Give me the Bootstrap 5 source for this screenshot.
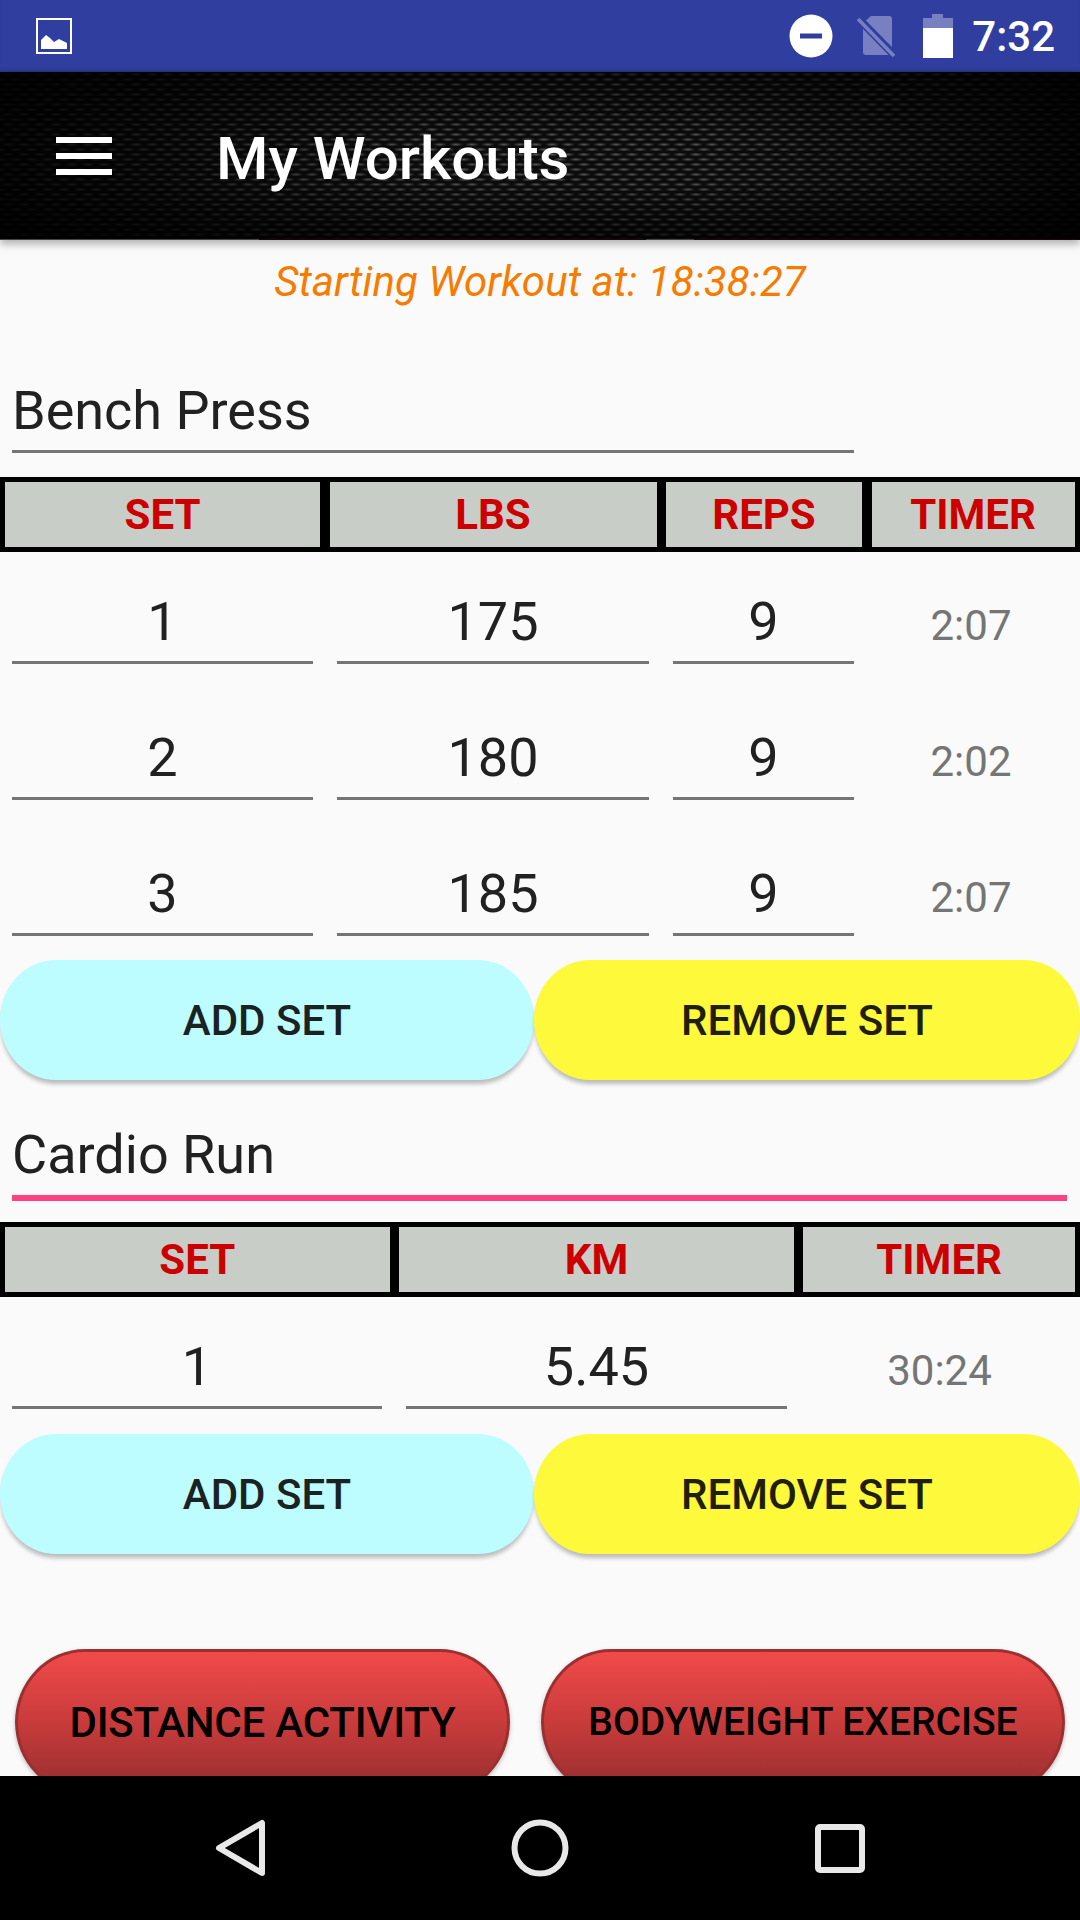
<!DOCTYPE html>
<html lang="en">
<head>
  <meta charset="UTF-8">
  <title>My Workouts</title>
  <link href="https://cdn.jsdelivr.net/npm/bootstrap@5.3.0/dist/css/bootstrap.min.css" rel="stylesheet">
  <style>
    body { background: #fafafa; font-family: Roboto, sans-serif; color: #212121; }
    .phone { width: 1080px; height: 1920px; overflow: hidden; }

    .status-bar { height: 72px; background: #303f9f; padding: 0 25px 0 36px; color: #fff; font-size: 42px; font-weight: 500; box-shadow: inset 0 -4px 4px -3px rgba(0,0,0,.2); }
    .ic-dnd { margin-right: 24px; }
    .ic-sim { margin-right: 26px; }
    .ic-batt { margin-right: 19px; }
    .tool-bar {
      height: 168px; padding: 0 0 0 56px; color: #fff; position: relative; z-index: 2;
      box-shadow: 0 4px 8px rgba(0,0,0,.3);
      background-color: #0c0c0c;
      background-image:
        linear-gradient(90deg, #444 0 259px, #16080f 259px 646px, #444 646px 694px, #16080f 694px),
        linear-gradient(90deg, rgba(0,0,0,.85) 0, rgba(0,0,0,.6) 14%, rgba(0,0,0,0) 40%, rgba(0,0,0,0) 66%, rgba(0,0,0,.55) 88%, rgba(0,0,0,.85) 100%),
        linear-gradient(180deg, rgba(0,0,0,.6) 0, rgba(0,0,0,0) 40%, rgba(0,0,0,0) 65%, rgba(0,0,0,.7) 100%),
        radial-gradient(ellipse 7px 2px at 8px 2.5px, #565656, rgba(80,80,80,0)),
        radial-gradient(ellipse 7px 2px at 0 7.5px, #565656, rgba(80,80,80,0)),
        radial-gradient(ellipse 7px 2px at 16px 7.5px, #565656, rgba(80,80,80,0));
      background-size: 100% 1px, auto, auto, 16px 10px, 16px 10px, 16px 10px;
      background-repeat: no-repeat, no-repeat, no-repeat, repeat, repeat, repeat;
      background-position: bottom, 0 0, 0 0, 0 0, 0 0, 0 0;
    }
    .burger { width: 56px; height: 38px; margin-right: 104px; display: flex; flex-direction: column; justify-content: space-between; }
    .burger span { height: 6px; background: #fff; }
    .tool-title { font-size: 60px; font-weight: 500; line-height: 1; padding-top: 5px; }

    .content { flex: 1 1 auto; min-height: 0; overflow: hidden; }
    .start-line { height: 84px; padding-top: 12px; font-size: 42px; line-height: 60px; font-style: italic; color: #f57c00; text-align: center; letter-spacing: .08px; }

    .name-field { width: 842px; margin: 35px 0 24px 12px; height: 94px; border-bottom: 3px solid #757575; font-size: 54px; line-height: 64px; padding-top: 20px; }
    .name-field.active { width: 1055px; height: 99px; margin-top: 22px; margin-bottom: 21px; padding-top: 21px; border-bottom: 6px solid #ff4081; }

    .head-row { height: 75px; background: #000; padding: 5px; gap: 9.5px; }
    .head-cell { background: #c9cdc7; color: #cc0000; font-size: 42px; font-weight: 700; }
    .val-row { height: 136px; }
    .val-row.one { height: 112px; }
    .val-box { text-align: center; font-size: 54px; line-height: 64px; }
    .val-line { border-bottom: 3px solid #757575; height: 112px; padding-top: 38px; margin-left: 24px; }
    .val-line:first-child { margin-left: 12px; }
    .val-timer { text-align: center; font-size: 42px; color: #757575; padding: 49px 0 0 8px; line-height: 50px; }
    .val-timer.wide { padding-left: 12px; }

    .set-row { margin-top: 24px; }
    .set-row.low { margin-top: 25px; }
    .set-btn { height: 120px; border: 0; border-radius: 56px / 60px; font-size: 42px; font-weight: 500; color: #1b2222; box-shadow: 0 5px 4px -1px rgba(0,0,0,.25); }
    .set-btn.add { width: 534px; background: #bdfcff; }
    .set-btn.remove { width: 546px; background: #fff93b; color: #201f0c; }

    .act-row { margin-top: 95px; padding: 0 15px; gap: 31px; }
    .act-btn { height: 146px; flex: 0 0 auto; border: 3px solid #9a3030; border-radius: 70px / 73px; color: #000; font-weight: 500; background: linear-gradient(180deg, #f24a4a 0, #c93b3b 50%, #962e2e 100%); box-shadow: 0 2px 4px rgba(0,0,0,.25); white-space: nowrap; padding: 0; }
    .act-btn.dist { width: 495px; font-size: 42px; letter-spacing: -.2px; }
    .act-btn.body { width: 524px; font-size: 39px; }

    .nav-bar { height: 144px; background: #000; position: relative; z-index: 2; }
    .nav-bar svg { display: block; }
  </style>
</head>
<body>
<div class="phone d-flex flex-column">

  <div class="status-bar d-flex align-items-center flex-shrink-0">
    <svg width="36" height="36" viewBox="0 0 36 36">
      <rect x="1" y="1" width="34" height="34" fill="none" stroke="#fff" stroke-width="2"/>
      <path d="M5 31V22L10 17L14 20L18 24L23 21L31 25V31Z" fill="#fff"/>
    </svg>
    <div class="ms-auto d-flex align-items-center">
      <svg class="ic-dnd" width="44" height="44" viewBox="0 0 44 44"><circle cx="22" cy="22" r="21.5" fill="#fff"/><rect x="11" y="19.5" width="22" height="5" fill="#303f9f"/></svg>
      <svg class="ic-sim" width="40" height="44" viewBox="0 0 40 44">
        <path d="M6 9V38a3 3 0 0 0 3 3H32a3 3 0 0 0 3-3V5a3 3 0 0 0-3-3H14Z" fill="#7880c2"/>
        <path d="M1 4L39 43" stroke="#303f9f" stroke-width="8"/>
        <path d="M1 5L37 42" stroke="#7880c2" stroke-width="3.5"/>
      </svg>
      <svg class="ic-batt" width="30" height="44" viewBox="0 0 30 44"><path d="M9 0H20V4H30V14H0V4H9Z" fill="#7880c2"/><rect y="14" width="30" height="30" fill="#fff"/></svg>
      <span>7:32</span>
    </div>
  </div>

  <div class="tool-bar d-flex align-items-center flex-shrink-0">
    <div class="burger"><span></span><span></span><span></span></div>
    <div class="tool-title">My Workouts</div>
  </div>

  <div class="content">
    <div class="start-line">Starting Workout at: 18:38:27</div>

    <div class="name-field">Bench Press</div>
    <div class="head-row d-flex">
      <div class="head-cell d-flex align-items-center justify-content-center" style="width:315px">SET</div>
      <div class="head-cell d-flex align-items-center justify-content-center" style="width:327px">LBS</div>
      <div class="head-cell d-flex align-items-center justify-content-center" style="width:196px">REPS</div>
      <div class="head-cell d-flex align-items-center justify-content-center" style="width:203px">TIMER</div>
    </div>
    <div class="val-row d-flex">
      <div class="val-box val-line" style="width:301px">1</div>
      <div class="val-box val-line" style="width:312px">175</div>
      <div class="val-box val-line" style="width:181px">9</div>
      <div class="val-timer flex-fill">2:07</div>
    </div>
    <div class="val-row d-flex">
      <div class="val-box val-line" style="width:301px">2</div>
      <div class="val-box val-line" style="width:312px">180</div>
      <div class="val-box val-line" style="width:181px">9</div>
      <div class="val-timer flex-fill">2:02</div>
    </div>
    <div class="val-row one d-flex">
      <div class="val-box val-line" style="width:301px">3</div>
      <div class="val-box val-line" style="width:312px">185</div>
      <div class="val-box val-line" style="width:181px">9</div>
      <div class="val-timer flex-fill">2:07</div>
    </div>
    <div class="set-row d-flex">
      <button class="btn set-btn add">ADD SET</button>
      <button class="btn set-btn remove">REMOVE SET</button>
    </div>

    <div class="name-field active">Cardio Run</div>
    <div class="head-row d-flex">
      <div class="head-cell d-flex align-items-center justify-content-center" style="width:385px">SET</div>
      <div class="head-cell d-flex align-items-center justify-content-center" style="width:395px">KM</div>
      <div class="head-cell d-flex align-items-center justify-content-center" style="width:272px">TIMER</div>
    </div>
    <div class="val-row one d-flex">
      <div class="val-box val-line" style="width:370px">1</div>
      <div class="val-box val-line" style="width:381px">5.45</div>
      <div class="val-timer wide flex-fill">30:24</div>
    </div>
    <div class="set-row low d-flex">
      <button class="btn set-btn add">ADD SET</button>
      <button class="btn set-btn remove">REMOVE SET</button>
    </div>

    <div class="act-row d-flex">
      <button class="btn act-btn dist">DISTANCE ACTIVITY</button>
      <button class="btn act-btn body">BODYWEIGHT EXERCISE</button>
    </div>
  </div>

  <div class="nav-bar d-flex flex-shrink-0">
    <svg width="1080" height="144" viewBox="0 0 1080 144">
      <path d="M262 47V97L219 72Z" fill="none" stroke="#e8e8e8" stroke-width="6" stroke-linejoin="round"/>
      <circle cx="540" cy="72" r="25.5" fill="none" stroke="#e8e8e8" stroke-width="6"/>
      <rect x="818" y="51" width="44" height="43" rx="2" fill="none" stroke="#e8e8e8" stroke-width="6"/>
    </svg>
  </div>
</div>
<script src="https://cdn.jsdelivr.net/npm/bootstrap@5.3.0/dist/js/bootstrap.bundle.min.js"></script>
</body>
</html>
